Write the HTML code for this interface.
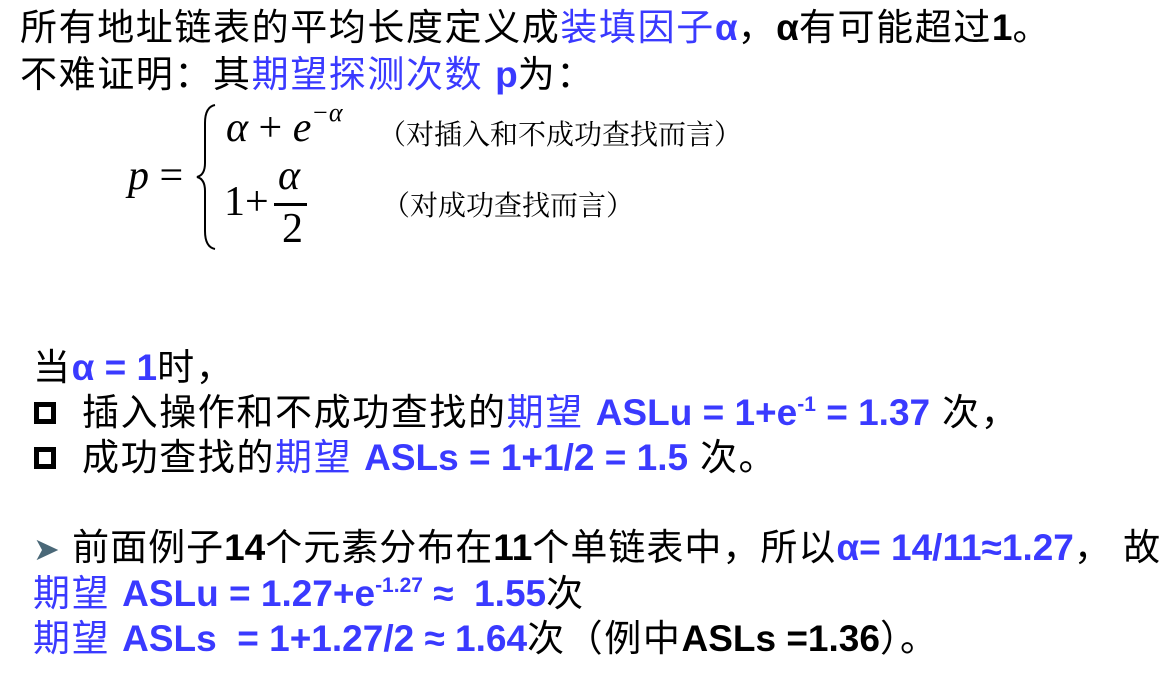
<!DOCTYPE html>
<html><head><meta charset="utf-8"><style>
body{margin:0;width:1167px;height:686px;background:#fff;overflow:hidden;position:relative;font-family:"Liberation Sans","Noto Sans CJK SC",sans-serif;color:#000}
.l{position:absolute;font-size:37px;line-height:40px;white-space:nowrap;letter-spacing:1.6px}
.b{color:#3a3aff}
.w{font-weight:bold;letter-spacing:0}
sup{font-size:21px;vertical-align:14px;line-height:0}
.m{position:absolute;font-family:"Liberation Serif",serif;font-size:42px;white-space:nowrap}
.c{position:absolute;font-family:"Liberation Serif","Noto Serif CJK SC",serif;font-size:28px;white-space:nowrap}
.sq{display:inline-block;width:22px;height:22px;border:5px solid #000;box-sizing:border-box;margin:0 26px 4px 12px;vertical-align:middle}
</style></head><body>
<div class="l" style="left:20px;top:8px">所有地址链表的平均长度定义成<span class="b">装填因子<span class="w">α</span></span>，<span class="w">α</span>有可能超过<span class="w">1</span>。</div>
<div class="l" style="left:20px;top:55px">不难证明：其<span class="b">期望探测次数 <span class="w">p</span></span>为：</div>

<div class="m" style="left:128px;top:152px"><i>p</i> =</div>
<svg style="position:absolute;left:195px;top:103px" width="25" height="148"><path d="M20 2 Q10 4 10 20 L10 60 Q10 72 2 74 Q10 76 10 88 L10 128 Q10 144 20 146" fill="none" stroke="#000" stroke-width="2"/></svg>
<div class="m" style="left:226px;top:104px"><i>α</i> + <i>e</i><sup style="font-size:26px;vertical-align:20px"><i>−α</i></sup></div>
<div class="m" style="left:224px;top:178px">1+</div>
<div class="m" style="left:278px;top:152px"><i>α</i></div>
<div style="position:absolute;left:274px;top:203px;width:33px;height:3px;background:#000"></div>
<div class="m" style="left:282px;top:205px">2</div>
<div class="c" style="left:378px;top:113px">（对插入和不成功查找而言）</div>
<div class="c" style="left:382px;top:184px">（对成功查找而言）</div>

<div class="l" style="left:33px;top:348px">当<span class="b w">α = 1</span>时，</div>
<div class="l" style="left:22px;top:393px"><span class="sq"></span>插入操作和不成功查找的<span class="b">期望 <span class="w">ASLu = 1+e<sup>-1</sup> = 1.37</span></span> 次，</div>
<div class="l" style="left:22px;top:438px"><span class="sq"></span>成功查找的<span class="b">期望 <span class="w">ASLs = 1+1/2 = 1.5</span></span> 次。</div>

<div class="l" style="left:33px;top:528px;letter-spacing:1px"><span style="color:#4a6878;font-size:32px">➤</span> 前面例子<span class="w">14</span>个元素分布在<span class="w">11</span>个单链表中，所以<span class="b w">α= 14/11≈1.27</span>， 故</div>
<div class="l" style="left:33px;top:574px"><span class="b">期望 <span class="w">ASLu = 1.27+e<sup>-1.27</sup> ≈ &nbsp;1.55</span></span>次</div>
<div class="l" style="left:33px;top:619px"><span class="b">期望 <span class="w">ASLs &nbsp;= 1+1.27/2 ≈ 1.64</span></span>次（例中<span class="w">ASLs =1.36</span>）。</div>
</body></html>
